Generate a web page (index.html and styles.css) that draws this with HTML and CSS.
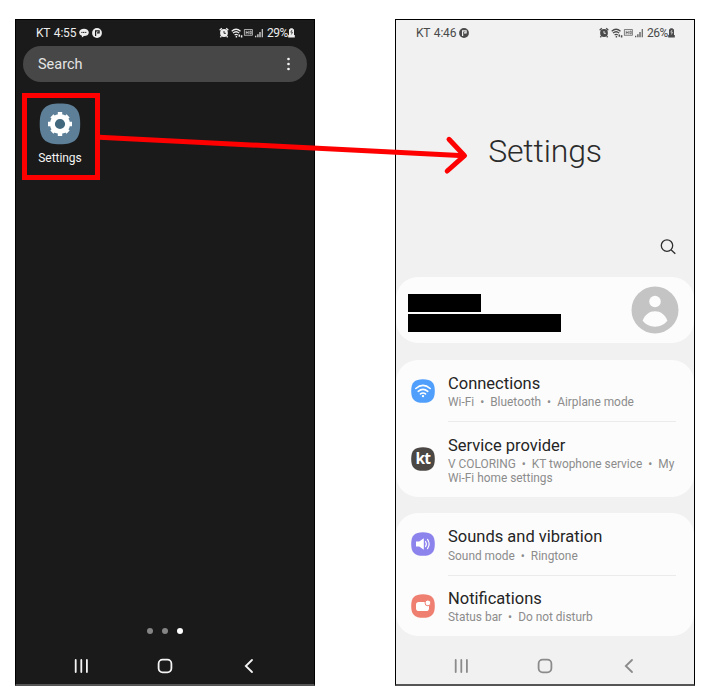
FILE: index.html
```
<!DOCTYPE html>
<html lang="en">
<head>
<meta charset="utf-8">
<title>Open Settings</title>
<link rel="stylesheet" href="styles.css">
</head>
<body>
<svg class="defs" width="0" height="0" aria-hidden="true">
  <symbol id="status" viewBox="0 0 48 14">
    <g fill="none" stroke="currentColor">
      <circle cx="5" cy="7" r="3.9" fill="currentColor" stroke="none"/>
      <path d="M.7 4.200 2.800 2.300M7.200 2.300l2.100 1.900M2.300 10.200l-1 1.100M7.700 10.200l1 1.100" stroke-width="1.400"/>
      <path d="M5 5v2.300h1.900" stroke="var(--bg)" stroke-width=".9"/>
      <path d="M12.700 5.200q4.400-3.900 8.800 0M14 7.100q3.200-2.700 6.200 0M15.600 9q1.600-1.300 3.200 0" stroke-width="1.250"/>
      <path d="M16.700 10.800h1.400M20.300 8.500v2.300M22.600 9.300v2.300" stroke-width="1.500"/>
      <path d="M25.400 9.500V3.500h8v5.800h-8M27.200 4.800v3.500M29.200 4.800v3.500M27.200 6.500h2M30.900 5.100h1.300v2.700h-1.300z" stroke-width=".85" opacity=".8"/>
      <path d="M36.700 9.700v1.600M38.900 8.300v3M41 6v5.300" stroke-width="1.200"/>
      <path d="M43.300 3v8.300" stroke-width="1.200" opacity=".85"/>
    </g>
  </symbol>
  <symbol id="battery" viewBox="0 0 7 10">
    <path d="M2.200.2h2.600v1H6V7H1V1.200h1.200zM.2 7h6.600v2.500H.2z" fill="currentColor"/>
    <path d="M4 2 2.800 4.200h1.700L3.300 6.500" fill="none" stroke="var(--bg)" stroke-width=".7"/>
  </symbol>
  <symbol id="badge" viewBox="0 0 10 10">
    <circle cx="5" cy="5" r="4.900" fill="currentColor"/>
    <path d="M3.600 8V2.900h3.500v2H5" fill="none" stroke="var(--bg)" stroke-width="1.200"/>
  </symbol>
  <symbol id="nav" viewBox="0 0 180 16">
    <g fill="none" stroke="currentColor" stroke-width="1.800" stroke-linecap="round">
      <path d="M1.700 1.900v12.200M7.300 1.900v12.200M12.900 1.900v12.200"/>
      <rect x="84.600" y="1.700" width="12.800" height="12.600" rx="4"/>
      <path d="M178 2l-6.200 6 6.200 6"/>
    </g>
  </symbol>
</svg>
<main class="stage">
  <section class="phone dark">
    <header class="status">
      <span class="clock">KT 4:55</span>
      <svg class="chat" viewBox="0 0 10 10"><path d="M5 .7C7.700.7 9.800 2.200 9.800 4.400S7.700 8 5 8L2.800 9.600 3 7.700C1.200 7.100.2 5.900.2 4.400.2 2.200 2.300.7 5 .7z" fill="currentColor"/><path d="M2.300 4.400h5.400" stroke="var(--bg)" stroke-dasharray="1.200 .5"/></svg>
      <svg class="badge"><use href="#badge"/></svg>
      <svg class="signals"><use href="#status"/></svg>
      <span class="percent">29%</span>
      <svg class="battery"><use href="#battery"/></svg>
    </header>
    <div class="search"><span>Search</span>
      <svg width="4" height="14" viewBox="0 0 4 14" fill="#f2f2f2"><circle cx="1.500" cy="2" r="1.350"/><circle cx="1.500" cy="7" r="1.350"/><circle cx="1.500" cy="12" r="1.350"/></svg>
    </div>
    <div class="app">
      <svg width="42" height="42" viewBox="0 0 42 42">
        <path d="M21 .5C36 .5 41.200 6 41.200 21S36 41.300 21 41.300.7 36 .7 21 6 .5 21 .5z" fill="#5d7f98"/>
        <circle cx="21" cy="21" r="6" fill="#41687d"/>
        <circle cx="21" cy="21" r="7.600" fill="none" stroke="#fff" stroke-width="5"/>
        <g stroke="#fff" stroke-width="4.400" stroke-linejoin="round">
          <path d="M21 9v4M21 29v4M9 21h4M29 21h4"/>
          <path d="M12.900 12.900l2.600 2.600M26.500 26.500l2.600 2.600M12.900 29.100l2.600-2.600M26.500 15.500l2.600-2.600"/>
        </g>
      </svg>
      <span>Settings</span>
    </div>
    <div class="dots"><i></i><i></i><i class="on"></i></div>
    <svg class="nav"><use href="#nav"/></svg>
  </section>

  <section class="phone light">
    <header class="status">
      <span class="clock">KT 4:46</span>
      <svg class="badge"><use href="#badge"/></svg>
      <svg class="signals"><use href="#status"/></svg>
      <span class="percent">26%</span>
      <svg class="battery"><use href="#battery"/></svg>
    </header>
    <h1>Settings</h1>
    <svg class="find" viewBox="0 0 16 16" fill="none" stroke="#2e2e2e" stroke-width="1.300"><circle cx="7" cy="6.600" r="5.700"/><path d="M11 10.800l4.300 4"/></svg>
    <div class="card profile">
      <div class="redacted"><i class="name"></i><i class="mail"></i></div>
      <svg width="48" height="48" viewBox="0 0 48 48"><circle cx="24" cy="24" r="23.500" fill="#c4c4c4"/><circle cx="24" cy="15.500" r="5.800" fill="#fcfcfc"/><path d="M11.600 34.500C14 28.500 18.500 25.200 24 25.200s10 3.300 12.400 9.300C33.500 38.500 29 40.700 24 40.700s-9.500-2.200-12.400-6.200z" fill="#fcfcfc"/></svg>
    </div>
    <div class="card">
      <div class="row">
        <svg class="icon" viewBox="0 0 24 24"><path class="blue" d="M12 .2C20.500.2 23.800 3.500 23.800 12S20.500 23.800 12 23.800.2 20.500.2 12 3.500.2 12 .2z"/><g fill="none" stroke="#fff" stroke-width="1.600" stroke-linecap="round"><path d="M4.800 9.500q7.200-6.200 14.400 0M7.200 12.300q4.800-4 9.600 0M9.500 14.900q2.500-1.900 5 0"/></g><circle cx="12" cy="17.100" r="1.200" fill="#fff"/></svg>
        <div class="copy"><h2>Connections</h2><p>Wi-Fi<b>•</b>Bluetooth<b>•</b>Airplane mode</p></div>
      </div>
      <div class="row tall">
        <svg class="icon" viewBox="0 0 24 24"><path class="ink" d="M12 .2C20.500.2 23.800 3.500 23.800 12S20.500 23.800 12 23.800.2 20.500.2 12 3.500.2 12 .2z"/><text x="11.800" y="17.300" class="kt">kt</text></svg>
        <div class="copy"><h2>Service provider</h2><p>V COLORING<b>•</b>KT twophone service<b>•</b>My<br>Wi-Fi home settings</p></div>
      </div>
    </div>
    <div class="card last">
      <div class="row">
        <svg class="icon" viewBox="0 0 24 24"><path class="violet" d="M12 .2C20.500.2 23.800 3.500 23.800 12S20.500 23.800 12 23.800.2 20.500.2 12 3.500.2 12 .2z"/><path d="M5 9.500h3.200l4.600-3.300v11.600l-4.600-3.300H5z" fill="#fff"/><path d="M14.500 9.500q1.700 2.500 0 5M16.500 7.400q3.300 4.600 0 9.200" fill="none" stroke="#fff" stroke-width="1.200" stroke-linecap="round"/></svg>
        <div class="copy"><h2>Sounds and vibration</h2><p>Sound mode<b>•</b>Ringtone</p></div>
      </div>
      <div class="row">
        <svg class="icon" viewBox="0 0 24 24"><path class="coral" d="M12 .2C20.500.2 23.800 3.500 23.800 12S20.500 23.800 12 23.800.2 20.500.2 12 3.500.2 12 .2z"/><rect x="5" y="8" width="13" height="9" rx="2.800" fill="#fff"/><circle cx="16.900" cy="8.900" r="2.900" fill="#fff" stroke="#ef7f71" stroke-width="1"/></svg>
        <div class="copy"><h2>Notifications</h2><p>Status bar<b>•</b>Do not disturb</p></div>
      </div>
    </div>
    <svg class="nav"><use href="#nav"/></svg>
  </section>

  <svg class="callout" viewBox="0 0 714 700" fill="none" stroke="#fe0000">
    <rect x="24.500" y="95.500" width="73" height="82" stroke-width="5"/>
    <path d="M99 137.300 464.500 155.700" stroke-width="5"/>
    <path d="M449 139.300 464.500 155.700 447.200 171" stroke-width="5" stroke-linecap="round" stroke-linejoin="round"/>
  </svg>
</main>
</body>
</html>
```
FILE: styles.css
```
* { box-sizing: border-box; }
body { margin: 0; background: #fff; font-family: Roboto, "Liberation Sans", sans-serif; }
h1, h2, p { margin: 0; font-weight: 400; }
.defs { position: absolute; }
.stage { position: relative; width: 714px; height: 700px; padding: 19px 0 0 15px; display: flex; gap: 80px; align-items: flex-start; overflow: hidden; }
.phone { width: 300px; height: 667px; border: 1px solid #000; border-bottom: 2px solid #555; display: flex; flex-direction: column; color: var(--fg); background: var(--bg); }
.dark { --bg: #1a1a1a; --fg: #ededed; }
.light { --bg: #f1f1f1; --fg: #4a4a4a; }

.status { height: 26px; flex: none; display: flex; align-items: center; padding: 0 19px 0 20px; font-size: 12px; }
.clock { width: 40px; margin-right: 3px; white-space: nowrap; letter-spacing: -.2px; word-spacing: 1px; }
.chat { width: 10px; height: 10px; margin-right: 3px; }
.badge { width: 10px; height: 10px; }
.signals { width: 48px; height: 14px; margin-left: auto; }
.percent { width: 21px; letter-spacing: -.5px; }
.battery { width: 7px; height: 10px; }

.search { height: 36px; flex: none; margin: 0 7px; border-radius: 18px; background: #474747; display: flex; align-items: center; justify-content: space-between; padding: 0 16px 0 15px; font-size: 14.500px; color: #e4e4e4; }
.app { width: 76px; margin: 21px 0 0 6px; display: flex; flex-direction: column; align-items: center; font-size: 12px; line-height: 14px; gap: 6px; }
.app span { letter-spacing: -.05px; color: #f4f4f4; }
.dots { margin-top: auto; display: flex; justify-content: center; gap: 9px; }
.dots i { width: 6px; height: 6px; border-radius: 50%; background: #858585; }
.dots .on { background: #fff; }
.nav { width: 180px; height: 16px; margin: 24px 0 10px 58px; flex: none; color: #f4f4f4; }
.light .nav { margin-top: auto; color: #8b8b8b; }

h1 { text-align: center; font-size: 32px; line-height: 38px; font-weight: 300; letter-spacing: -.15px; color: #2b2b2b; margin-top: 86px; }
.find { width: 16px; height: 16px; flex: none; margin: 69px 18px 0 auto; }
.card { background: #fcfcfc; border-radius: 22px; flex: none; }
.profile { height: 66px; margin: 22px 0 17px; display: flex; align-items: center; justify-content: space-between; padding: 0 15px 0 12px; }
.profile + .card { margin-bottom: 16px; }
.redacted { display: grid; gap: 2px; padding-top: 6px; }
.redacted i { height: 18px; background: #000; }
.name { width: 73px; }
.mail { width: 153px; }
.row { height: 61px; display: flex; align-items: center; padding: 0 18px 0 15px; }
.row + .tall { height: 76px; }
.last .row:first-child { height: 62px; }
.icon { width: 24px; height: 24px; flex: none; margin-right: 13px; }
.copy { flex: 1; height: 100%; padding-top: 14px; }
.row + .row .copy { border-top: 1px solid #ebebeb; padding-top: 13px; }
.row + .tall .copy { padding-top: 14px; }
h2 { color: #252525; font-size: 16.500px; line-height: 19px; white-space: nowrap; }
p { color: #8c8c8c; font-size: 11.900px; line-height: 14px; margin-top: 2px; white-space: nowrap; }
p b { display: inline-block; width: 16px; text-align: center; font-weight: 400; font-size: 12px; line-height: 0; }
.last p { padding-top: 1px; }
.last .row + .row p { padding-top: 0; }
.blue { fill: #509ffc; }
.ink { fill: #4b4744; }
.violet { fill: #8c83ed; }
.coral { fill: #ef7f71; }
.kt { fill: #fff; font: 700 15.500px "Open Sans", sans-serif; text-anchor: middle; letter-spacing: -.8px; }
.callout { position: absolute; left: 0; top: 0; width: 714px; height: 700px; pointer-events: none; }
```
